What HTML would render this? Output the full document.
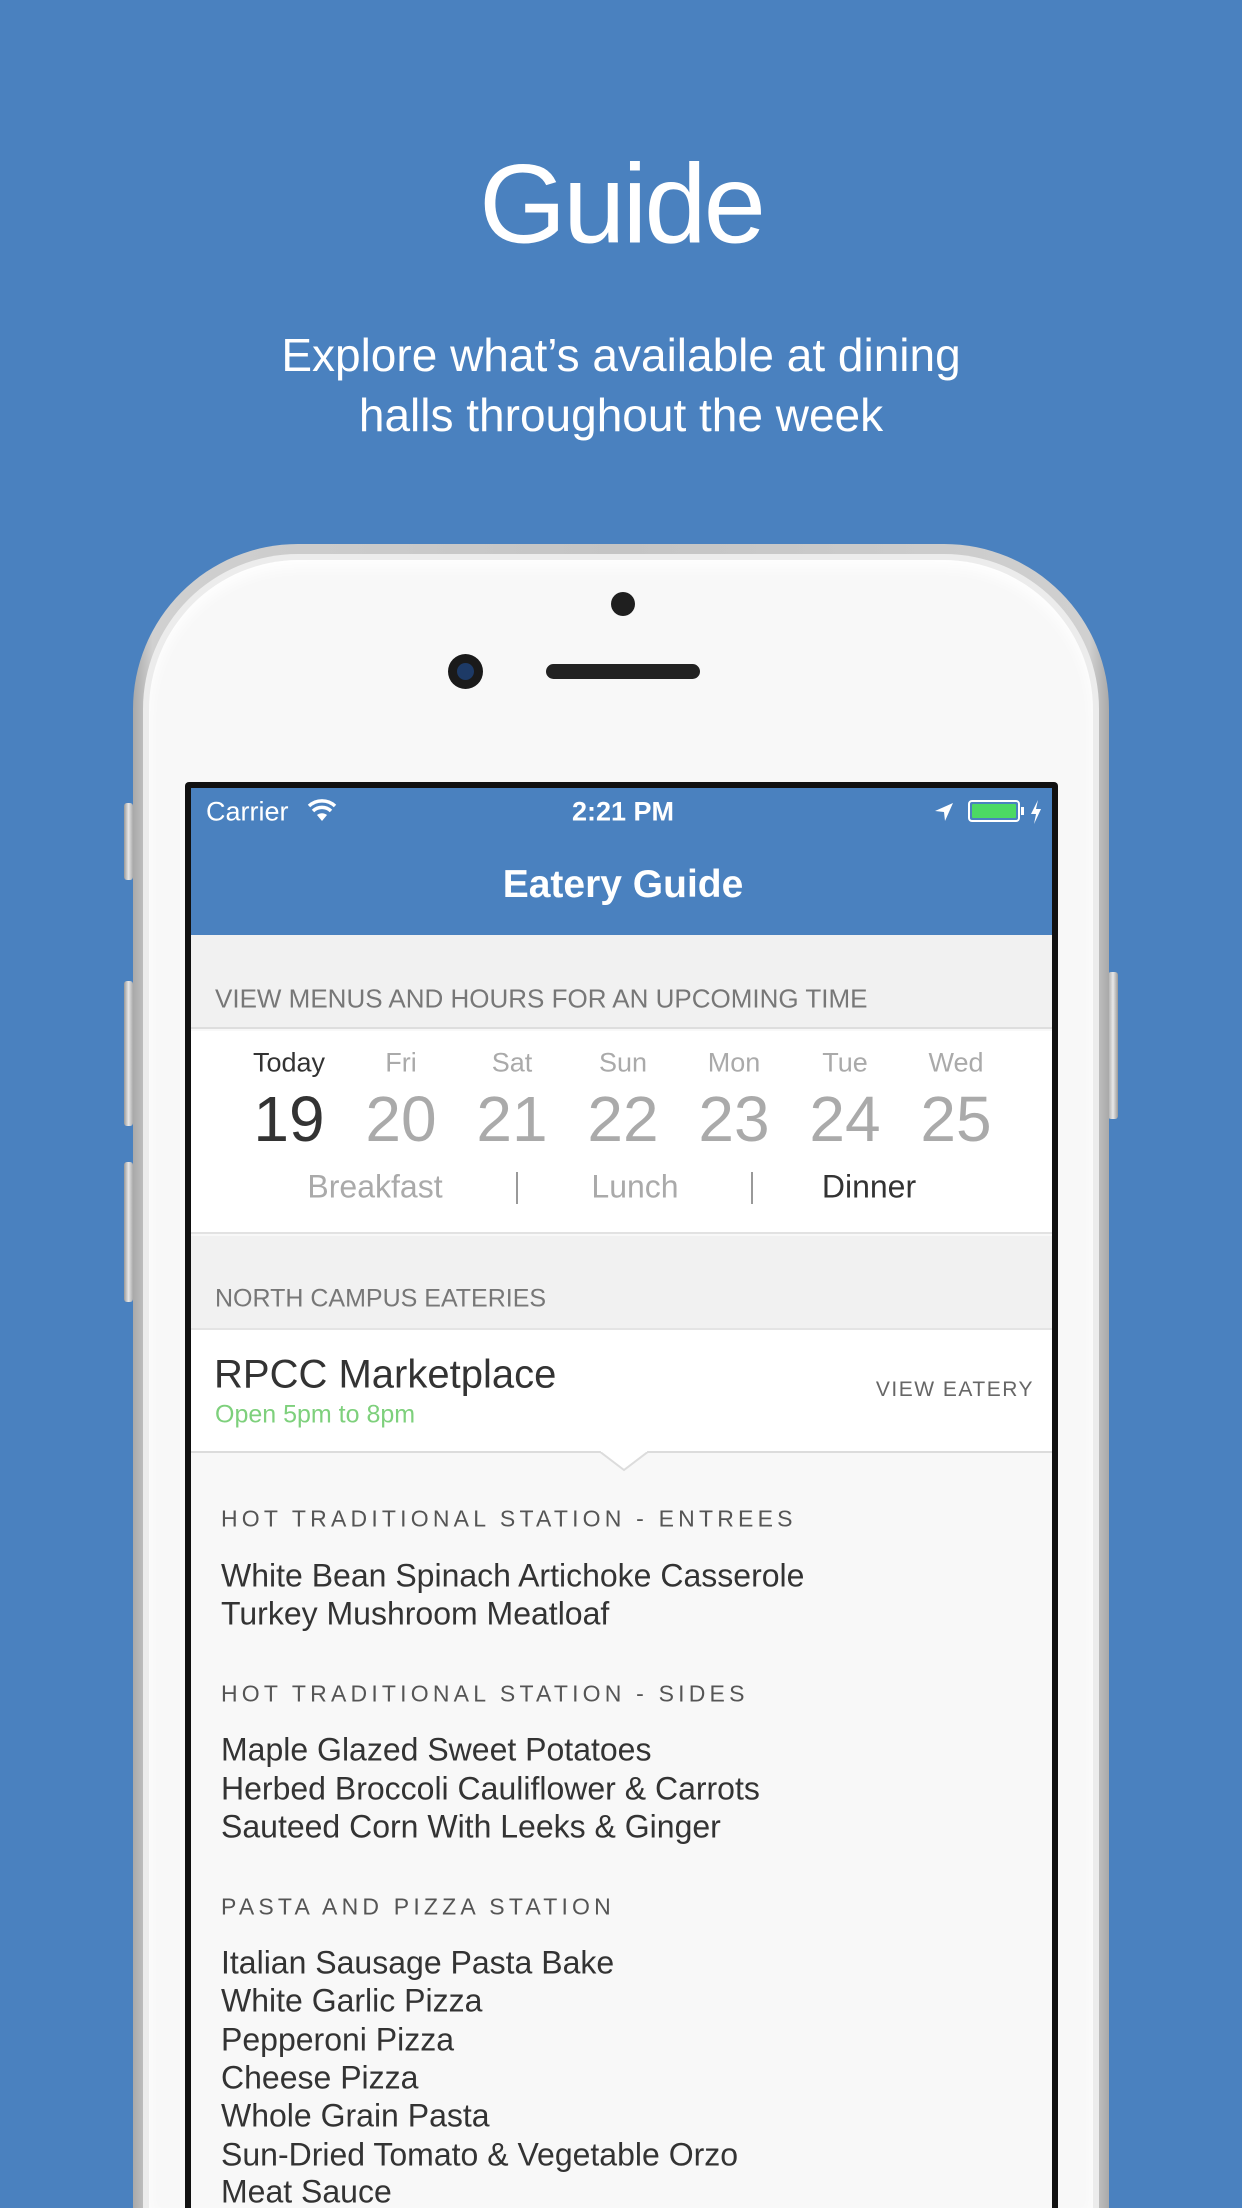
<!DOCTYPE html>
<html style="width:1242px;height:2208px;overflow:hidden"><head><meta charset="utf-8">
<style>
*{margin:0;padding:0;box-sizing:border-box}
body{width:1242px;height:2208px;overflow:hidden;background:#4a81bf;font-family:"Liberation Sans",sans-serif;position:relative}
.a{position:absolute;white-space:nowrap}
.c{transform:translate(-50%,-50%)}
.l{transform:translateY(-50%)}
</style></head><body>
<div class="a c" style="left:621px;top:204px;font-size:112px;color:#fff;letter-spacing:-3px">Guide</div>
<div class="a c" style="left:621px;top:355px;font-size:46px;color:#fff">Explore what’s available at dining</div>
<div class="a c" style="left:621px;top:415px;font-size:46px;color:#fff">halls throughout the week</div>

<div class="a" style="left:124px;top:803px;width:9px;height:77px;background:linear-gradient(90deg,#999,#e8e8e8,#aaa);border-radius:3px"></div>
<div class="a" style="left:124px;top:981px;width:9px;height:145px;background:linear-gradient(90deg,#999,#e8e8e8,#aaa);border-radius:3px"></div>
<div class="a" style="left:124px;top:1162px;width:9px;height:140px;background:linear-gradient(90deg,#999,#e8e8e8,#aaa);border-radius:3px"></div>
<div class="a" style="left:1108px;top:972px;width:10px;height:147px;background:linear-gradient(90deg,#aaa,#e8e8e8,#999);border-radius:3px"></div>

<div class="a" style="left:133px;top:544px;width:976px;height:1664px;border-radius:165px 165px 0 0;background:linear-gradient(90deg,#a9a9a9,#d0d0d0 2%,#c4c4c4 50%,#d0d0d0 98%,#a9a9a9)"></div>
<div class="a" style="left:143px;top:554px;width:956px;height:1654px;border-radius:155px 155px 0 0;background:#ececec"></div>
<div class="a" style="left:149px;top:560px;width:944px;height:1648px;border-radius:150px 150px 0 0;background:#f8f8f8;box-shadow:inset 0 8px 14px rgba(255,255,255,.9)"></div>

<div class="a" style="left:611px;top:592px;width:24px;height:24px;border-radius:50%;background:#1f1f1f"></div>
<div class="a" style="left:448px;top:654px;width:35px;height:35px;border-radius:50%;background:#1a1a1a"><div style="margin:9px;width:17px;height:17px;border-radius:50%;background:#1d3a66"></div></div>
<div class="a" style="left:546px;top:664px;width:154px;height:15px;border-radius:8px;background:#222"></div>

<div class="a" style="left:185px;top:782px;width:873px;height:1426px;background:#111;border-radius:4px 4px 0 0"></div>
<div class="a" style="left:191px;top:788px;width:861px;height:1420px;background:#f8f8f8;overflow:hidden">
  <div class="a" style="left:0;top:0;width:861px;height:147px;background:#4a81bf"></div>
  <div class="a l" style="left:15px;top:24px;font-size:27px;color:#fff">Carrier</div>
  <svg class="a" style="left:116px;top:11px" width="30" height="24" viewBox="0 0 30 24"><path d="M15 22 L10 16 A8 8 0 0 1 20 16 Z" fill="#fff"/><path d="M6 12 A13 13 0 0 1 24 12" stroke="#fff" stroke-width="3.5" fill="none"/><path d="M2 7 A19 19 0 0 1 28 7" stroke="#fff" stroke-width="3.5" fill="none"/></svg>
  <div class="a c" style="left:432px;top:24px;font-size:27px;color:#fff;font-weight:bold">2:21 PM</div>
  <svg class="a" style="left:742px;top:13px" width="22" height="22" viewBox="0 0 22 22"><path d="M20 2 L2 10 L11 11 L12 20 Z" fill="#fff"/></svg>
  <div class="a" style="left:777px;top:12px;width:52px;height:22px;border:2px solid #fff;border-radius:4px;padding:2px"><div style="width:100%;height:100%;background:#4cd964;border-radius:1px"></div></div>
  <div class="a" style="left:830px;top:19px;width:3px;height:8px;background:#fff"></div>
  <svg class="a" style="left:838px;top:11px" width="14" height="26" viewBox="0 0 14 26"><path d="M9 1 L2 15 L7 15 L5 25 L12 10 L7 10 Z" fill="#fff"/></svg>
  <div class="a c" style="left:432px;top:97px;font-size:39px;color:#fff;font-weight:bold">Eatery Guide</div>

  <div class="a" style="left:0;top:147px;width:861px;height:94px;background:#f1f1f1;border-bottom:2px solid #dedede"></div>
  <div class="a l" style="left:24px;top:211px;font-size:26px;color:#777">VIEW MENUS AND HOURS FOR AN UPCOMING TIME</div>
  <div class="a" style="left:0;top:243px;width:861px;height:203px;background:#fff;border-bottom:2px solid #e2e2e2"></div>
  <div class="a c" style="left:98px;top:275px;font-size:27px;color:#333">Today</div>
  <div class="a c" style="left:210px;top:275px;font-size:27px;color:#aaa">Fri</div>
  <div class="a c" style="left:321px;top:275px;font-size:27px;color:#aaa">Sat</div>
  <div class="a c" style="left:432px;top:275px;font-size:27px;color:#aaa">Sun</div>
  <div class="a c" style="left:543px;top:275px;font-size:27px;color:#aaa">Mon</div>
  <div class="a c" style="left:654px;top:275px;font-size:27px;color:#aaa">Tue</div>
  <div class="a c" style="left:765px;top:275px;font-size:27px;color:#aaa">Wed</div>
  <div class="a c" style="left:98px;top:331px;font-size:64px;color:#333">19</div>
  <div class="a c" style="left:210px;top:331px;font-size:64px;color:#aaa">20</div>
  <div class="a c" style="left:321px;top:331px;font-size:64px;color:#aaa">21</div>
  <div class="a c" style="left:432px;top:331px;font-size:64px;color:#aaa">22</div>
  <div class="a c" style="left:543px;top:331px;font-size:64px;color:#aaa">23</div>
  <div class="a c" style="left:654px;top:331px;font-size:64px;color:#aaa">24</div>
  <div class="a c" style="left:765px;top:331px;font-size:64px;color:#aaa">25</div>
  <div class="a c" style="left:184px;top:399px;font-size:32px;color:#aaa">Breakfast</div>
  <div class="a" style="left:325px;top:384px;width:2px;height:32px;background:#999"></div>
  <div class="a c" style="left:444px;top:399px;font-size:32px;color:#aaa">Lunch</div>
  <div class="a" style="left:560px;top:384px;width:2px;height:32px;background:#999"></div>
  <div class="a c" style="left:678px;top:399px;font-size:32px;color:#333">Dinner</div>

  <div class="a" style="left:0;top:448px;width:861px;height:92px;background:#f1f1f1"></div>
  <div class="a l" style="left:24px;top:511px;font-size:25px;color:#777">NORTH CAMPUS EATERIES</div>
  <div class="a" style="left:0;top:540px;width:861px;height:125px;background:#fff;border-top:2px solid #e4e4e4;border-bottom:2px solid #dcdcdc"></div>
  <svg class="a" style="left:408px;top:663px" width="50" height="22" viewBox="0 0 50 22"><path d="M0 0 L25 19 L50 0" fill="#fff" stroke="#dcdcdc" stroke-width="2"/><rect x="2" y="0" width="46" height="1" fill="#fff"/></svg>
  <div class="a l" style="left:23px;top:587px;font-size:40px;color:#333">RPCC Marketplace</div>
  <div class="a l" style="left:24px;top:627px;font-size:25px;color:#7ed07c">Open 5pm to 8pm</div>
  <div class="a l" style="right:18px;top:602px;font-size:21px;color:#666;letter-spacing:1.5px">VIEW EATERY</div>

  <div style="position:absolute;left:30px;top:0;font-size:32px;color:#333">
    <div class="a l" style="left:0;top:731px;font-size:23px;color:#555;letter-spacing:4.2px">HOT TRADITIONAL STATION - ENTREES</div>
    <div class="a l" style="left:0;top:788px">White Bean Spinach Artichoke Casserole</div>
    <div class="a l" style="left:0;top:826px">Turkey Mushroom Meatloaf</div>
    <div class="a l" style="left:0;top:906px;font-size:23px;color:#555;letter-spacing:4.2px">HOT TRADITIONAL STATION - SIDES</div>
    <div class="a l" style="left:0;top:962px">Maple Glazed Sweet Potatoes</div>
    <div class="a l" style="left:0;top:1001px">Herbed Broccoli Cauliflower &amp; Carrots</div>
    <div class="a l" style="left:0;top:1039px">Sauteed Corn With Leeks &amp; Ginger</div>
    <div class="a l" style="left:0;top:1119px;font-size:23px;color:#555;letter-spacing:4.2px">PASTA AND PIZZA STATION</div>
    <div class="a l" style="left:0;top:1175px">Italian Sausage Pasta Bake</div>
    <div class="a l" style="left:0;top:1213px">White Garlic Pizza</div>
    <div class="a l" style="left:0;top:1252px">Pepperoni Pizza</div>
    <div class="a l" style="left:0;top:1290px">Cheese Pizza</div>
    <div class="a l" style="left:0;top:1328px">Whole Grain Pasta</div>
    <div class="a l" style="left:0;top:1367px">Sun-Dried Tomato &amp; Vegetable Orzo</div>
    <div class="a l" style="left:0;top:1404px">Meat Sauce</div>
  </div>
</div>
</body></html>
